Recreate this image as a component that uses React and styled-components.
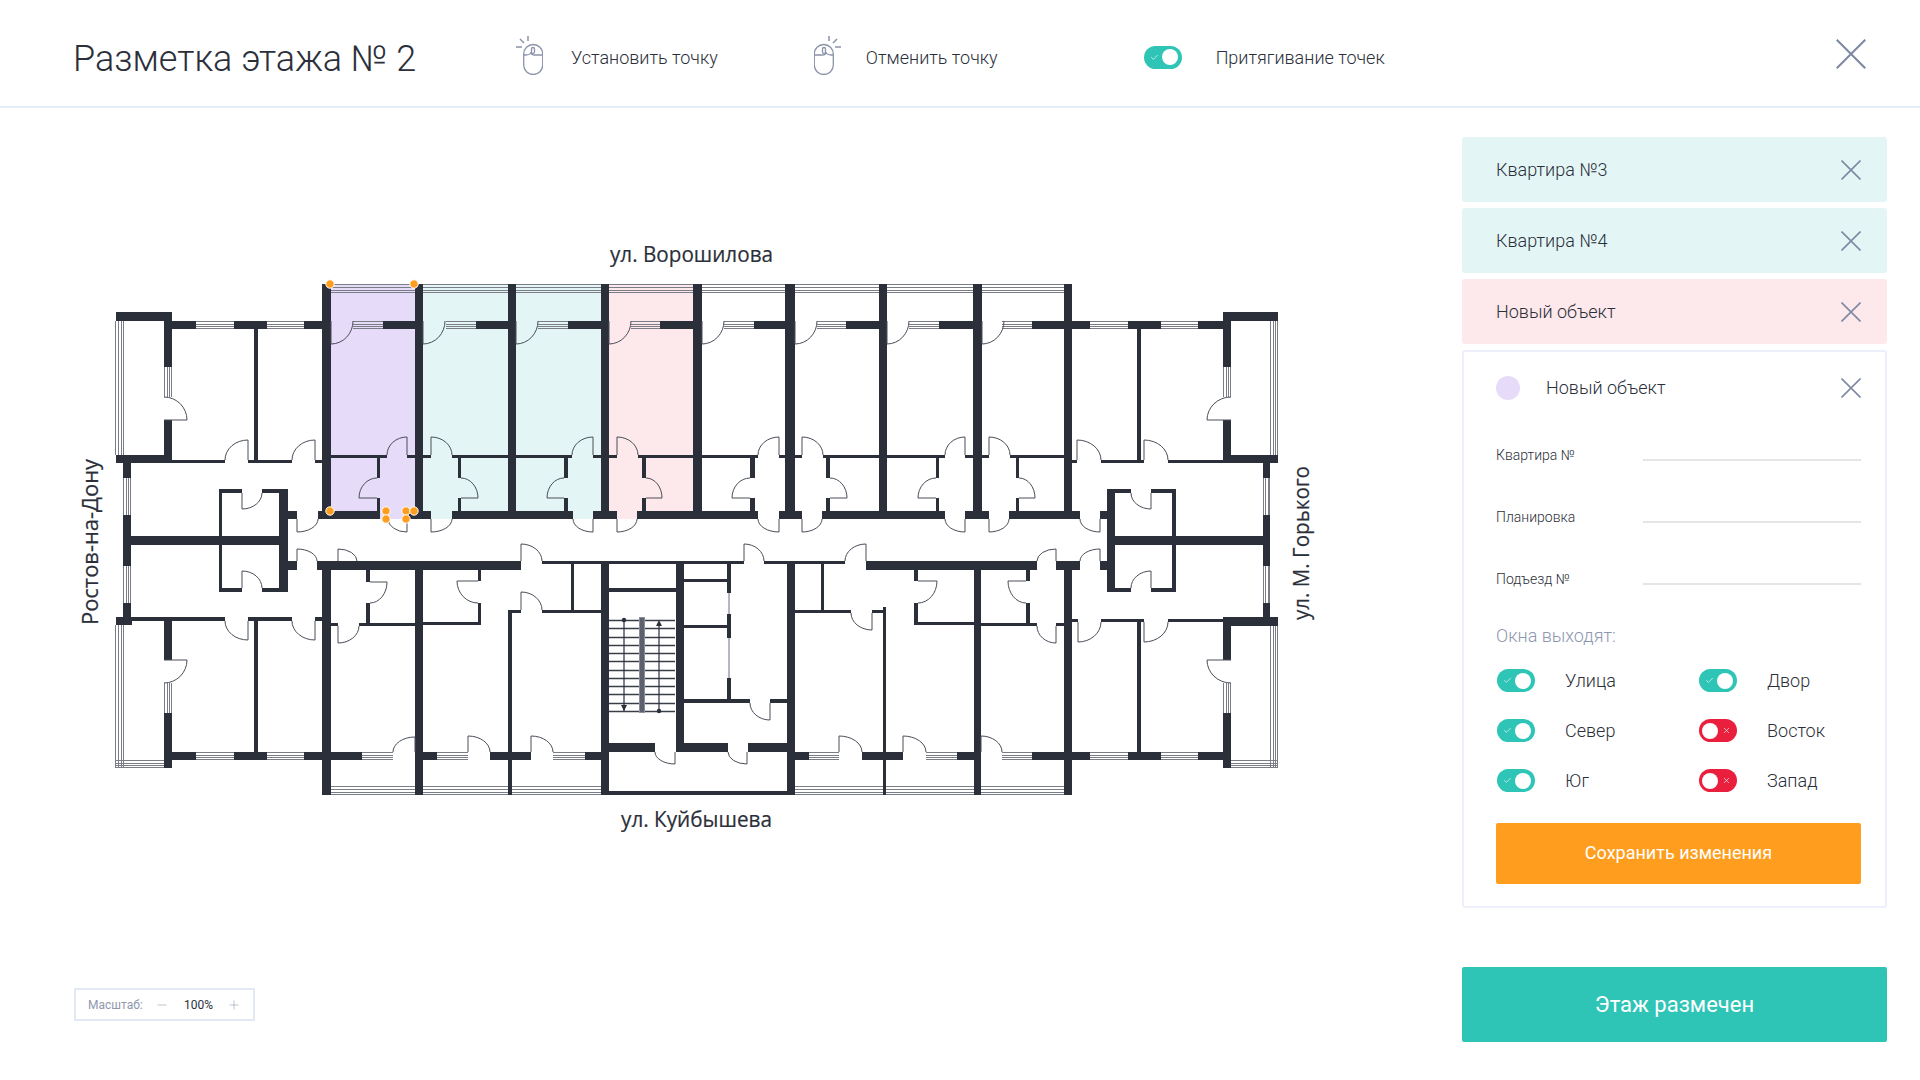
import React from "react";
import styled, { createGlobalStyle } from "styled-components";
import { Check, Minus, Plus, X } from "lucide-react";

const GlobalStyle = createGlobalStyle`
  html, body { margin: 0; padding: 0; background: #fff; }
  body { font-family: "Roboto", "Liberation Sans", sans-serif; color: #2b2f3a; overflow: hidden; }
`;

const Page = styled.div`
  width: 1920px;
  height: 1080px;
  display: flex;
  flex-direction: column;
`;

//Header
const Header = styled.header`
  height: 106px;
  flex: none;
  box-sizing: content-box;
  display: flex;
  align-items: center;
  padding: 0 54px 0 73px;
  border-bottom: 2px solid #e6eef9;
`;

const HeaderBody = styled.div`
  flex: 1;
  display: flex;
  align-items: center;
  padding-top: 8px;
  height: 98px;
`;

const Title = styled.h1`
  width: 443px;
  margin: 4px 0 0;
  font-size: 36px;
  font-weight: 300;
`;

const HintIcon = styled.span`
  display: flex;
  margin-top: -4px;
`;

const HintText = styled.span`
  font-size: 18px;
  font-weight: 300;
  margin-left: ${(p) => p.$gap}px;
  margin-right: ${(p) => p.$after || 0}px;
`;

const CloseBig = styled.button`
  margin: 0 0 6px auto;
  padding: 0;
  border: 0;
  background: none;
  display: flex;
`;

//Switch
const Switch = styled.div`
  flex: none;
  width: 38px;
  height: 23px;
  border-radius: 12px;
  position: relative;
  background: ${(p) => (p.$on ? "#2ec5b6" : "#ea1f3d")};
  color: rgba(255, 255, 255, 0.85);
`;

const Knob = styled.span`
  position: absolute;
  top: 3.5px;
  left: ${(p) => (p.$on ? 18 : 3)}px;
  width: 16px;
  height: 16px;
  border-radius: 50%;
  background: #fff;
`;

const SwitchMark = styled.span`
  position: absolute;
  top: 7px;
  left: ${(p) => (p.$on ? 6 : 23)}px;
  display: flex;
`;

const Toggle = ({ on }) => (
  <Switch $on={on}>
    <SwitchMark $on={on}>{on ? <Check size={9} strokeWidth={2} /> : <X size={9} strokeWidth={2} />}</SwitchMark>
    <Knob $on={on} />
  </Switch>
);

//Main
const Main = styled.main`
  flex: 1;
  display: flex;
`;

const PlanColumn = styled.section`
  width: 1462px;
  flex: none;
  display: flex;
  flex-direction: column;
`;

const PlanSvg = styled.svg`
  display: block;
  width: 1462px;
  height: 860px;
  flex: none;
`;

const StreetLabel = styled.text`
  font-family: "Open Sans", "Noto Sans", sans-serif;
  font-size: 22px;
  fill: #2b2f3a;
  stroke: #2b2f3a;
  stroke-width: 0.2px;
`;

const ZoomBox = styled.div`
  width: 181px;
  height: 33px;
  box-sizing: border-box;
  margin: 20px 0 0 74px;
  padding: 0 12px;
  display: flex;
  align-items: center;
  border: 2px solid #e3e8f5;
  font-size: 12px;
`;

const ZoomLabel = styled.span`
  color: #8f97ae;
  width: 71px;
`;

const ZoomStep = styled.span`
  display: flex;
  color: #8f97ae;
`;

const ZoomValue = styled.span`
  margin: 0 14px 0 15px;
  width: 30px;
  text-align: center;
`;

const Sidebar = styled.aside`
  width: 425px;
  padding-top: 29px;
  display: flex;
  flex-direction: column;
  gap: 6px;
`;

const ObjectRow = styled.div`
  height: 65px;
  box-sizing: border-box;
  padding: 0 26px 0 34px;
  display: flex;
  align-items: center;
  justify-content: space-between;
  border-radius: 3px;
  background: ${(p) => p.$bg};
  font-size: 18px;
  font-weight: 300;
`;

const Panel = styled.div`
  box-sizing: border-box;
  height: 558px;
  border: 2px solid #edf0fa;
  border-radius: 3px;
  padding: 24px 24px 0 32px;
`;

const PanelHead = styled.div`
  height: 24px;
  display: flex;
  align-items: center;
  font-size: 18px;
  font-weight: 300;
`;

const PanelName = styled.span`
  margin-bottom: 2px;
`;

const Dot = styled.span`
  width: 24px;
  height: 24px;
  border-radius: 50%;
  background: #e6dbf9;
  margin-right: 26px;
`;

const PanelClose = styled.span`
  margin-left: auto;
  display: flex;
`;

const Field = styled.div`
  height: 62px;
  display: flex;
  align-items: flex-end;
`;

const FieldLabel = styled.label`
  width: 147px;
  flex: none;
  font-size: 14px;
  line-height: 14px;
  font-weight: 300;
`;

const FieldLine = styled.div`
  flex: 1;
  height: 2px;
  background: #e5e5e5;
  position: relative;
  top: -1px;
`;

const WindowsTitle = styled.div`
  margin-top: 39px;
  font-size: 18px;
  line-height: 22px;
  font-weight: 300;
  color: #8f97ae;
`;

const SwitchGrid = styled.div`
  margin-top: 22px;
  display: grid;
  grid-template-columns: 202px 1fr;
  row-gap: 27px;
`;

const SwitchRow = styled.div`
  display: flex;
  align-items: center;
  padding-left: 1px;
  gap: 30px;
  font-size: 18px;
  font-weight: 300;
`;

const SaveButton = styled.button`
  display: block;
  width: 365px;
  height: 61px;
  margin-top: 31px;
  padding: 0 0 3px;
  border: 0;
  border-radius: 2px;
  background: #ff9e1e;
  color: #fff;
  font: 400 18px "Roboto", sans-serif;
`;

const DoneButton = styled.button`
  height: 75px;
  margin-top: 53px;
  border: 0;
  border-radius: 2px;
  background: #2ec5b6;
  color: #fff;
  font: 400 22px "Roboto", sans-serif;
`;

//Plan data, page coordinates
const WALLS = [
  [116,312,172,321],[164,321,172,367],[164,420,172,455],[116,455,172,463],
  [172,321,196,329],[234,321,267,329],[304,321,322,329],[254,329,258,460],
  [172,460,225,463],[248,460,292,463],[315,460,322,463],
  [123,463,131,478],[123,515,131,566],[123,603,131,617],[116,617,132,625],
  [132,617,225,621],[248,617,292,621],[315,617,322,621],
  [164,621,172,660],[164,713,172,768],[254,621,258,752],
  [172,752,196,760],[234,752,267,760],[304,752,362,760],
  [219,489,242,493],[262,489,288,493],[219,493,222,592],[279,489,288,592],[219,588,242,592],[262,588,288,592],
  [123,536,288,545],[288,511,297,519],[288,561,297,570],
  [322,284,331,519],[322,570,331,795],[415,284,423,519],[415,570,423,795],
  [508,284,516,519],[508,610,512,795],[601,284,609,519],[601,561,609,795],
  [693,284,702,519],[785,284,795,519],[787,561,795,795],[879,284,887,519],[883,607,886,795],
  [973,284,982,519],[974,561,981,795],[1064,284,1072,519],[1064,561,1072,795],
  [318,511,380,519],[407,511,431,519],[452,511,573,519],[593,511,617,519],[637,511,758,519],
  [779,511,802,519],[822,511,945,519],[965,511,989,519],[1009,511,1080,519],[1100,511,1107,519],
  [317,561,521,570],[866,561,1037,570],[1056,561,1080,570],[1100,561,1107,570],
  [542,561,744,564],[764,561,845,564],
  [331,455,387,458],[407,455,431,458],[452,455,572,458],[593,455,617,458],[638,455,758,458],
  [779,455,802,458],[823,455,945,458],[965,455,989,458],[1010,455,1064,458],
  [377,458,380,478],[377,498,380,511],[458,458,461,478],[458,498,461,511],
  [564,458,568,478],[564,498,568,511],[642,458,646,478],[642,498,646,511],
  [750,458,755,478],[750,498,755,511],[826,458,830,478],[826,498,830,511],
  [936,458,939,478],[936,498,939,511],[1016,458,1019,478],[1016,498,1019,511],
  [366,570,370,582],[366,603,370,623],[359,623,415,626],[331,623,338,626],
  [478,570,481,581],[478,603,481,625],[423,622,481,625],
  [508,610,521,613],[542,610,601,613],[571,564,574,610],
  [423,752,437,760],[490,752,531,760],[585,752,609,760],
  [795,752,809,760],[862,752,903,760],[957,752,981,760],[1032,752,1090,760],[1128,752,1161,760],[1198,752,1231,760],
  [609,588,676,592],[676,563,684,751],[609,743,655,752],[676,743,728,752],[748,743,787,752],
  [684,579,727,582],[684,625,727,628],[727,563,731,593],[727,614,731,638],[727,678,731,703],
  [684,699,750,703],[770,699,787,703],[609,791,787,795],
  [795,610,851,613],[872,610,886,613],[821,564,824,610],
  [914,570,918,581],[914,603,918,625],[914,622,974,625],
  [981,623,1037,626],[1026,570,1030,581],[1026,603,1030,623],[1056,623,1064,626],
  [1107,489,1131,493],[1151,489,1176,493],[1107,489,1115,592],[1172,489,1176,592],[1107,588,1131,592],[1151,588,1176,592],
  [1107,536,1270,545],[1263,463,1270,478],[1263,515,1270,566],[1263,603,1270,617],[1223,617,1278,626],
  [1072,460,1077,463],[1101,460,1144,463],[1168,460,1223,463],
  [1072,619,1078,622],[1101,619,1144,622],[1168,619,1223,622],
  [1137,329,1141,460],[1137,622,1141,752],
  [1072,321,1090,329],[1128,321,1161,329],[1198,321,1231,329],[1223,312,1278,321],
  [1223,321,1231,367],[1223,420,1231,455],[1223,455,1278,463],[1223,626,1231,660],[1223,713,1231,768],
  [383,321,415,329],[476,321,508,329],[568,321,601,329],[660,321,693,329],
  [754,321,785,329],[846,321,879,329],[939,321,973,329],[1032,321,1064,329],
];

const WINDOWS = [
  [196,321,234,329],[267,321,304,329],[353,321,383,329],[446,321,476,329],[538,321,568,329],[631,321,660,329],
  [724,321,754,329],[817,321,846,329],[909,321,939,329],[1002,321,1032,329],[1090,321,1128,329],[1161,321,1198,329],
  [331,284,415,293],[423,284,508,293],[516,284,601,293],[609,284,693,293],
  [702,284,785,293],[795,284,879,293],[887,284,973,293],[982,284,1064,293],
  [115,321,124,455],[164,367,172,397],[123,478,131,515],[123,566,131,603],
  [1270,321,1278,455],[1223,367,1231,397],[1263,478,1270,515],[1263,566,1270,603],
  [164,683,172,713],[1223,683,1231,713],
  [196,752,234,760],[267,752,304,760],[362,752,393,760],[437,752,468,760],[553,752,585,760],
  [809,752,839,760],[926,752,957,760],[1002,752,1032,760],[1090,752,1128,760],[1161,752,1198,760],
  [331,786,415,795],[423,786,508,795],[512,786,601,795],[795,786,883,795],[886,786,974,795],[981,786,1064,795],
  [115,625,124,768],[115,760,164,768],[1270,626,1278,768],[1231,760,1278,768],
];

// hinge x, hinge y, leaf end x, leaf end y, arc end x, arc end y
const DOORS = [
  ...[331,423,516,609,702,795,887,982].map((x) => [x,321,x,344,x + 22,321]),
  [164,420,187,420,164,397],[1231,420,1207,420,1231,397],[164,660,187,660,164,683],[1231,660,1207,660,1231,683],
  [248,460,248,440,225,460],[315,460,315,440,292,460],[1077,460,1077,440,1101,460],[1144,460,1144,440,1168,460],
  [248,621,248,640,225,621],[315,621,315,640,292,621],[1078,622,1078,642,1101,622],[1144,622,1144,642,1168,622],
  [242,493,242,509,262,493],[242,588,242,571,262,588],[1151,493,1151,509,1131,493],[1151,588,1151,571,1131,588],
  [297,519,297,532,318,519],[297,561,297,549,317,561],[1100,519,1100,532,1080,519],[1100,561,1100,549,1080,561],[1056,561,1056,549,1037,561],
  [407,455,407,437,387,455],[431,455,431,437,452,455],[593,455,593,437,572,455],[617,455,617,437,638,455],
  [779,455,779,437,758,455],[802,455,802,437,823,455],[965,455,965,437,945,455],[989,455,989,437,1010,455],
  [407,519,407,532,388,519],[431,519,431,532,452,519],[593,519,593,532,573,519],[617,519,617,532,637,519],
  [779,519,779,532,758,519],[802,519,802,532,822,519],[965,519,965,532,945,519],[989,519,989,532,1009,519],
  [377,498,359,498,377,478],[461,498,478,498,461,478],[564,498,547,498,564,478],[646,498,662,498,646,478],
  [750,498,732,498,750,478],[830,498,847,498,830,478],[936,498,918,498,936,478],[1019,498,1035,498,1019,478],
  [338,561,338,549,357,561],[521,561,521,544,542,561],[744,561,744,544,764,561],[866,561,866,544,845,561],
  [370,582,387,582,370,603],[338,626,338,643,359,626],[478,581,457,581,478,603],[521,610,521,592,542,610],
  [872,613,872,630,851,613],[918,581,937,581,918,603],[1026,581,1008,581,1026,603],[1056,626,1056,643,1037,626],
  [675,752,675,764,655,752],[747,752,747,764,728,752],[770,703,770,720,750,703],
  [415,752,415,737,393,752],[468,752,468,736,490,752],[531,752,531,736,553,752],
  [839,752,839,736,862,752],[903,752,903,736,926,752],[981,752,981,736,1002,752],
];

const ZONES = [
  [331,415,"#e6dbf9"],[423,508,"#e3f6f5"],[516,601,"#e3f6f5"],[609,693,"#fde8eb"],
];

const POINTS = [[330,284],[414,284],[330,511],[386,511],[386,519],[406,511],[414,511],[406,519]];

const STEP_LINES = Array.from({ length: 12 }, (_, i) => Math.round(620 + i * 8.27) + 0.5);

const WindowMark = ({ box: [x1, y1, x2, y2] }) => {
  const horizontal = x2 - x1 > y2 - y1;
  const size = horizontal ? y2 - y1 : x2 - x1;
  const lines = [0.5, Math.round(size / 3) + 0.5, Math.round((size * 2) / 3) + 0.5, size - 0.5];
  return lines.map((o) =>
    horizontal ? (
      <line key={o} x1={x1} x2={x2} y1={y1 + o} y2={y1 + o} stroke="#7a7d86" />
    ) : (
      <line key={o} y1={y1} y2={y2} x1={x1 + o} x2={x1 + o} stroke="#7a7d86" />
    )
  );
};

const doorPath = ([cx, cy, ax, ay, bx, by]) => {
  const sweep = (ax - cx) * (by - cy) - (ay - cy) * (bx - cx) > 0 ? 1 : 0;
  return `M${cx} ${cy}L${ax} ${ay}A${Math.abs(ax - bx)} ${Math.abs(ay - by)} 0 0 ${sweep} ${bx} ${by}`;
};

const FloorPlan = () => (
  <PlanSvg viewBox="0 108 1462 860">
    {ZONES.map(([x1, x2, fill]) => (
      <rect key={x1} x={x1} y={284} width={x2 - x1} height={235} fill={fill} />
    ))}
    {WINDOWS.map((w, i) => (
      <WindowMark key={i} box={w} />
    ))}
    {WALLS.map(([x1, y1, x2, y2], i) => (
      <rect key={i} x={x1} y={y1} width={x2 - x1} height={y2 - y1} fill="#2b2f3a" />
    ))}
    <rect x={728} y={593} width={2} height={21} fill="#b4b7be" />
    <rect x={728} y={638} width={2} height={40} fill="#b4b7be" />
    {DOORS.map((d, i) => (
      <path key={i} d={doorPath(d)} fill="none" stroke="#4a4e59" strokeWidth={1} />
    ))}
    {STEP_LINES.map((y) => (
      <line key={y} x1={609} x2={675} y1={y} y2={y} stroke="#3a3e49" strokeWidth={1.3} />
    ))}
    <rect x={639.5} y={617.5} width={5} height={95} fill="#5d616b" stroke="#8b8e96" />
    <path d="M624 620V711M659 622V711" stroke="#2b2f3a" strokeWidth={1.2} />
    <circle cx={624} cy={620} r={2.2} fill="#2b2f3a" />
    <circle cx={659} cy={711} r={2.2} fill="#2b2f3a" />
    <path d="M621 705L624 711L627 705ZM656 626L659 620L662 626Z" fill="#2b2f3a" />
    {POINTS.map(([cx, cy]) => (
      <circle key={`${cx}-${cy}`} cx={cx} cy={cy} r={4.2} fill="#ff9e1e" stroke="#fff" />
    ))}
    <StreetLabel x={610} y={262} textLength={163} lengthAdjust="spacingAndGlyphs">ул. Ворошилова</StreetLabel>
    <StreetLabel x={621} y={827} textLength={151} lengthAdjust="spacingAndGlyphs">ул. Куйбышева</StreetLabel>
    <StreetLabel transform="translate(98 625) rotate(-90)" textLength={166} lengthAdjust="spacingAndGlyphs">Ростов-на-Дону</StreetLabel>
    <StreetLabel transform="translate(1309 620) rotate(-90)" textLength={154} lengthAdjust="spacingAndGlyphs">ул. М. Горького</StreetLabel>
  </PlanSvg>
);

const MouseIcon = ({ flip }) => (
  <svg width="27" height="40" viewBox="0 0 27 40" fill="none" stroke="#8b93ab" strokeWidth="1.3">
    <g transform={flip ? "translate(27 0) scale(-1 1)" : undefined}>
      <rect x="8" y="9.5" width="19" height="30" rx="9.5" transform="translate(-0.3 0)" />
      <path d="M7.7 20H10c2 0 5-1 5-3M26.7 20h-8c-2 0-3.700-1-3.700-3" />
      <rect x="15.500" y="12.500" width="3" height="6" rx="1.500" />
      <path d="M12 1v5M4 4l4 4M0 12h6" strokeWidth="1.500" />
    </g>
  </svg>
);

const CrossIcon = ({ size }) => (
  <svg width={size} height={size} viewBox="0 0 20 20" stroke="#7f89a3" strokeWidth={size > 24 ? 1.4 : 1.6}>
    <path d="M0.5 0.500L19.500 19.500M19.500 0.500L0.500 19.500" />
  </svg>
);

const SWITCHES = [
  ["Улица", true],["Двор", true],["Север", true],["Восток", false],["Юг", true],["Запад", false],
];

const App = () => (
  <Page>
    <GlobalStyle />
    <Header>
      <HeaderBody>
        <Title>Разметка этажа № 2</Title>
        <HintIcon><MouseIcon /></HintIcon>
        <HintText $gap={28} $after={96}>Установить точку</HintText>
        <HintIcon><MouseIcon flip /></HintIcon>
        <HintText $gap={25} $after={146}>Отменить точку</HintText>
        <Toggle on />
        <HintText $gap={34}>Притягивание точек</HintText>
        <CloseBig>
          <CrossIcon size={30} />
        </CloseBig>
      </HeaderBody>
    </Header>
    <Main>
      <PlanColumn>
        <FloorPlan />
        <ZoomBox>
          <ZoomLabel>Масштаб:</ZoomLabel>
          <ZoomStep><Minus size={14} strokeWidth={1} /></ZoomStep>
          <ZoomValue>100%</ZoomValue>
          <ZoomStep><Plus size={14} strokeWidth={1} /></ZoomStep>
        </ZoomBox>
      </PlanColumn>
      <Sidebar>
        <ObjectRow $bg="#e3f6f5">Квартира №3<CrossIcon size={20} /></ObjectRow>
        <ObjectRow $bg="#e3f6f5">Квартира №4<CrossIcon size={20} /></ObjectRow>
        <ObjectRow $bg="#fde8eb">Новый объект<CrossIcon size={20} /></ObjectRow>
        <Panel>
          <PanelHead>
            <Dot />
            <PanelName>Новый объект</PanelName>
            <PanelClose><CrossIcon size={20} /></PanelClose>
          </PanelHead>
          <Field><FieldLabel>Квартира №</FieldLabel><FieldLine /></Field>
          <Field><FieldLabel>Планировка</FieldLabel><FieldLine /></Field>
          <Field><FieldLabel>Подъезд №</FieldLabel><FieldLine /></Field>
          <WindowsTitle>Окна выходят:</WindowsTitle>
          <SwitchGrid>
            {SWITCHES.map(([name, on]) => (
              <SwitchRow key={name}>
                <Toggle on={on} />
                {name}
              </SwitchRow>
            ))}
          </SwitchGrid>
          <SaveButton>Сохранить изменения</SaveButton>
        </Panel>
        <DoneButton>Этаж размечен</DoneButton>
      </Sidebar>
    </Main>
  </Page>
);

export default App;
